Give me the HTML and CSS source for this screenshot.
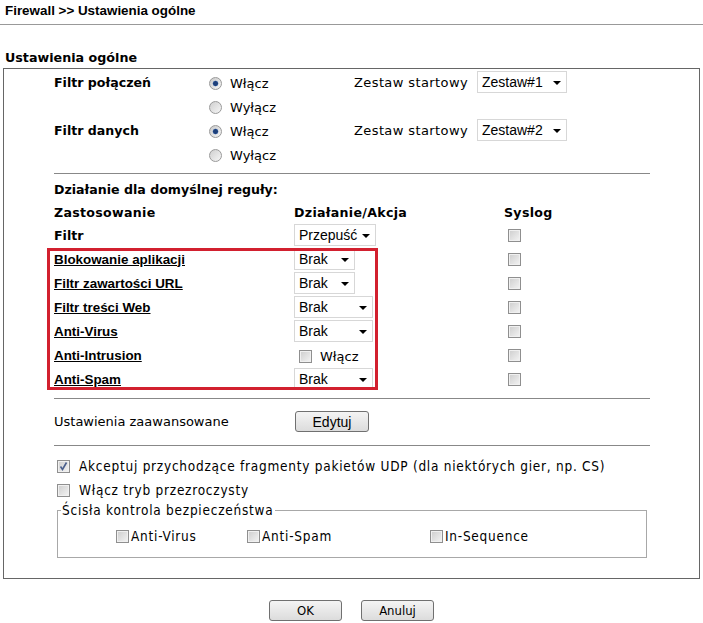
FILE: index.html
```html
<!DOCTYPE html>
<html lang="pl">
	<head>
		<meta charset="utf-8" />
		<title>Firewall &gt;&gt; Ustawienia ogólne</title>
		<link rel="stylesheet" href="styles.css">
	</head>
	<body>
		<h1 class="crumb">Firewall &gt;&gt; Ustawienia ogólne</h1>
		<h2 class="section-title">Ustawienia ogólne</h2>
		<form class="panel">
			<div class="filters">
				<span class="label">Filtr połączeń</span>
				<label class="radio"><input type="radio" name="conn" checked> Włącz</label>
				<span class="set-label">Zestaw startowy</span>
				<span class="select w90"><select><option>Zestaw#1</option></select></span>

				<span></span>
				<label class="radio"><input type="radio" name="conn"> Wyłącz</label>
				<span></span>
				<span></span>

				<span class="label">Filtr danych</span>
				<label class="radio"><input type="radio" name="data" checked> Włącz</label>
				<span class="set-label">Zestaw startowy</span>
				<span class="select w90"><select><option>Zestaw#2</option></select></span>

				<span></span>
				<label class="radio"><input type="radio" name="data"> Wyłącz</label>
				<span></span>
				<span></span>
			</div>

			<div class="sep"></div>

			<div class="rules">
				<div class="rules-title">Działanie dla domyślnej reguły:</div>
				<div class="rule head">
					<span>Zastosowanie</span>
					<span>Działanie/Akcja</span>
					<span>Syslog</span>
				</div>
				<div class="rule">
					<span class="label">Filtr</span>
					<span class="select w82"><select><option>Przepuść</option></select></span>
					<span><input type="checkbox"></span>
				</div>
				<div class="rule">
					<a class="link" href="#">Blokowanie aplikacji</a>
					<span class="select w61"><select><option>Brak</option></select></span>
					<span><input type="checkbox"></span>
				</div>
				<div class="rule">
					<a class="link" href="#">Filtr zawartości URL</a>
					<span class="select w61"><select><option>Brak</option></select></span>
					<span><input type="checkbox"></span>
				</div>
				<div class="rule">
					<a class="link" href="#">Filtr treści Web</a>
					<span class="select w79"><select><option>Brak</option></select></span>
					<span><input type="checkbox"></span>
				</div>
				<div class="rule">
					<a class="link" href="#">Anti-Virus</a>
					<span class="select w79"><select><option>Brak</option></select></span>
					<span><input type="checkbox"></span>
				</div>
				<div class="rule">
					<a class="link" href="#">Anti-Intrusion</a>
					<label class="inline-check"><input type="checkbox"> Włącz</label>
					<span><input type="checkbox"></span>
				</div>
				<div class="rule">
					<a class="link" href="#">Anti-Spam</a>
					<span class="select w79"><select><option>Brak</option></select></span>
					<span><input type="checkbox"></span>
				</div>
				<div class="highlight"></div>
			</div>

			<div class="sep"></div>

			<div class="advanced">
				<span class="adv-label">Ustawienia zaawansowane</span>
				<button type="button" class="btn">Edytuj</button>
			</div>

			<div class="sep wide"></div>

			<div class="options">
				<label class="opt">
					<span class="box-wrap">
						<input type="checkbox" checked>
						<svg class="tick" width="13" height="13" viewBox="0 0 13 13"><path d="M3.5 6.5 L5.5 9.5 L9.5 2.5" fill="none" stroke="#4a5f8c" stroke-width="1.6"/></svg>
					</span>
					Akceptuj przychodzące fragmenty pakietów UDP (dla niektórych gier, np. CS)
				</label>
				<label class="opt">
					<span class="box-wrap"><input type="checkbox"></span>
					Włącz tryb przezroczysty
				</label>
			</div>

			<fieldset class="strict">
				<legend>Ścisła kontrola bezpieczeństwa</legend>
				<div class="strict-row">
					<label><input type="checkbox">Anti-Virus</label>
					<label><input type="checkbox">Anti-Spam</label>
					<label><input type="checkbox">In-Sequence</label>
				</div>
			</fieldset>
		</form>

		<div class="actions">
			<button type="button" class="btn">OK</button>
			<button type="button" class="btn">Anuluj</button>
		</div>
	</body>
</html>
```

FILE: styles.css
```css
body {
	background: #ffffff;
	color: #000000;
	font-family: "DejaVu Sans", Verdana, sans-serif;
	font-size: 12px;
	margin: 0;
}

.crumb {
	border-bottom: 1px solid #999999;
	box-sizing: border-box;
	font: bold 13.4px "Liberation Sans", Arial, sans-serif;
	height: 25px;
	line-height: 16px;
	margin: 0;
	padding: 3px 5px 0;
}

.section-title {
	font-size: 12.7px;
	font-weight: bold;
	height: 16px;
	line-height: 16px;
	margin: 25px 0 2px;
	padding-left: 5px;
}

.panel {
	border: 1px solid #666666;
	margin: 0 3px;
	padding: 1px 49px 20px 50px;
}

.label {
	font-size: 12.6px;
	font-weight: bold;
}

.filters {
	align-items: center;
	display: grid;
	grid-auto-rows: 24px;
	grid-template-columns: 155px 145px 123px auto;
}

.radio {
	align-items: center;
	display: flex;
	font-size: 13px;
	gap: 8px;
	padding-top: 3px;
}

.set-label {
	font-size: 13px;
	letter-spacing: 0.4px;
}

input[type="radio"] {
	appearance: none;
	background: radial-gradient(circle at 50% 50%, #1d3f7a 0 2px, #5a7fb8 2.6px, transparent 3.2px),
		linear-gradient(135deg, #c8c8c8, #f6f6f6);
	border: 1px solid #9a9a9a;
	border-radius: 50%;
	height: 13px;
	margin: 0;
	width: 13px;
}

input[type="radio"]:not(:checked) {
	background: linear-gradient(135deg, #cfcfcf, #f6f6f6);
}

input[type="checkbox"] {
	appearance: none;
	background: linear-gradient(135deg, #cdcdcd, #f4f4f4);
	border: 1px solid #8f8f8f;
	box-shadow: inset 0 0 0 1px #f0f0f0;
	display: block;
	height: 13px;
	margin: 0;
	width: 13px;
}

.select {
	display: inline-block;
	position: relative;
}

.select select {
	appearance: none;
	background: #ffffff;
	border: 1px solid #d7d7d7;
	border-radius: 0;
	color: #000000;
	font: 14px "Liberation Sans", Arial, sans-serif;
	height: 22px;
	padding: 0 0 0 4px;
	width: 100%;
}

.select::after {
	border-left: 4px solid transparent;
	border-right: 4px solid transparent;
	border-top: 4px solid #000000;
	content: "";
	position: absolute;
	right: 6px;
	top: 10px;
	pointer-events: none;
}

.w90 { width: 90px; }
.w82 { width: 82px; }
.w79 { width: 79px; }
.w61 { width: 61px; }

.sep {
	border-top: 1px solid #888888;
	margin-top: 7px;
}

.sep.wide {
	margin-top: 12px;
}

.rules {
	margin-top: 4px;
	position: relative;
}

.rules-title {
	font-size: 12.6px;
	font-weight: bold;
	height: 24px;
	line-height: 24px;
}

.rule {
	align-items: center;
	display: grid;
	grid-template-columns: 240px 210px 1fr;
	height: 24px;
}

.rule > span:last-child input {
	margin-left: 4px;
}

.rule.head {
	font-size: 12.6px;
	font-weight: bold;
	height: 21px;
	letter-spacing: 0.3px;
}

.link {
	color: #000000;
	font: bold 13.4px "Liberation Sans", Arial, sans-serif;
	text-decoration: underline;
}

.inline-check {
	align-items: center;
	display: flex;
	font-size: 13px;
	gap: 8px;
	padding-left: 5px;
	padding-top: 2px;
}

.highlight {
	border: 3px solid #d2202f;
	box-sizing: border-box;
	height: 142px;
	left: -7px;
	position: absolute;
	top: 70px;
	width: 331px;
}

.advanced {
	align-items: center;
	display: grid;
	grid-template-columns: 241px auto;
	height: 23px;
	margin-top: 11px;
}

.adv-label {
	font-size: 13px;
}

.btn {
	background: linear-gradient(#f4f4f4, #dcdcdc);
	border: 1px solid #707070;
	border-radius: 3px;
	color: #000000;
	font: 14px "Liberation Sans", Arial, sans-serif;
	height: 21px;
	padding: 0;
	width: 74px;
}

.options {
	margin-top: 8px;
}

.opt {
	align-items: center;
	display: flex;
	font-size: 13.5px;
	font-stretch: condensed;
	gap: 9px;
	height: 24px;
	letter-spacing: 0.75px;
	padding-left: 3px;
}

.box-wrap {
	position: relative;
}

.tick {
	left: 0;
	position: absolute;
	top: 0;
}

.strict {
	border: 1px solid #a8a8a8;
	font-size: 13.5px;
	font-stretch: condensed;
	letter-spacing: 0.75px;
	margin: 0 3px;
	padding: 0 0 9px;
}

.strict legend {
	margin-left: 3px;
	padding: 0 2px 0 1px;
}

.strict-row {
	display: grid;
	grid-template-columns: 131px 183px auto;
	height: 24px;
	margin-top: 6px;
	padding-left: 58px;
}

.strict-row label {
	align-items: center;
	display: flex;
	gap: 2px;
}

.actions {
	display: flex;
	gap: 19px;
	justify-content: center;
	margin-top: 21px;
}

.actions .btn {
	font-family: "DejaVu Sans", sans-serif;
	font-size: 13px;
	font-stretch: condensed;
	width: 73px;
}
```
